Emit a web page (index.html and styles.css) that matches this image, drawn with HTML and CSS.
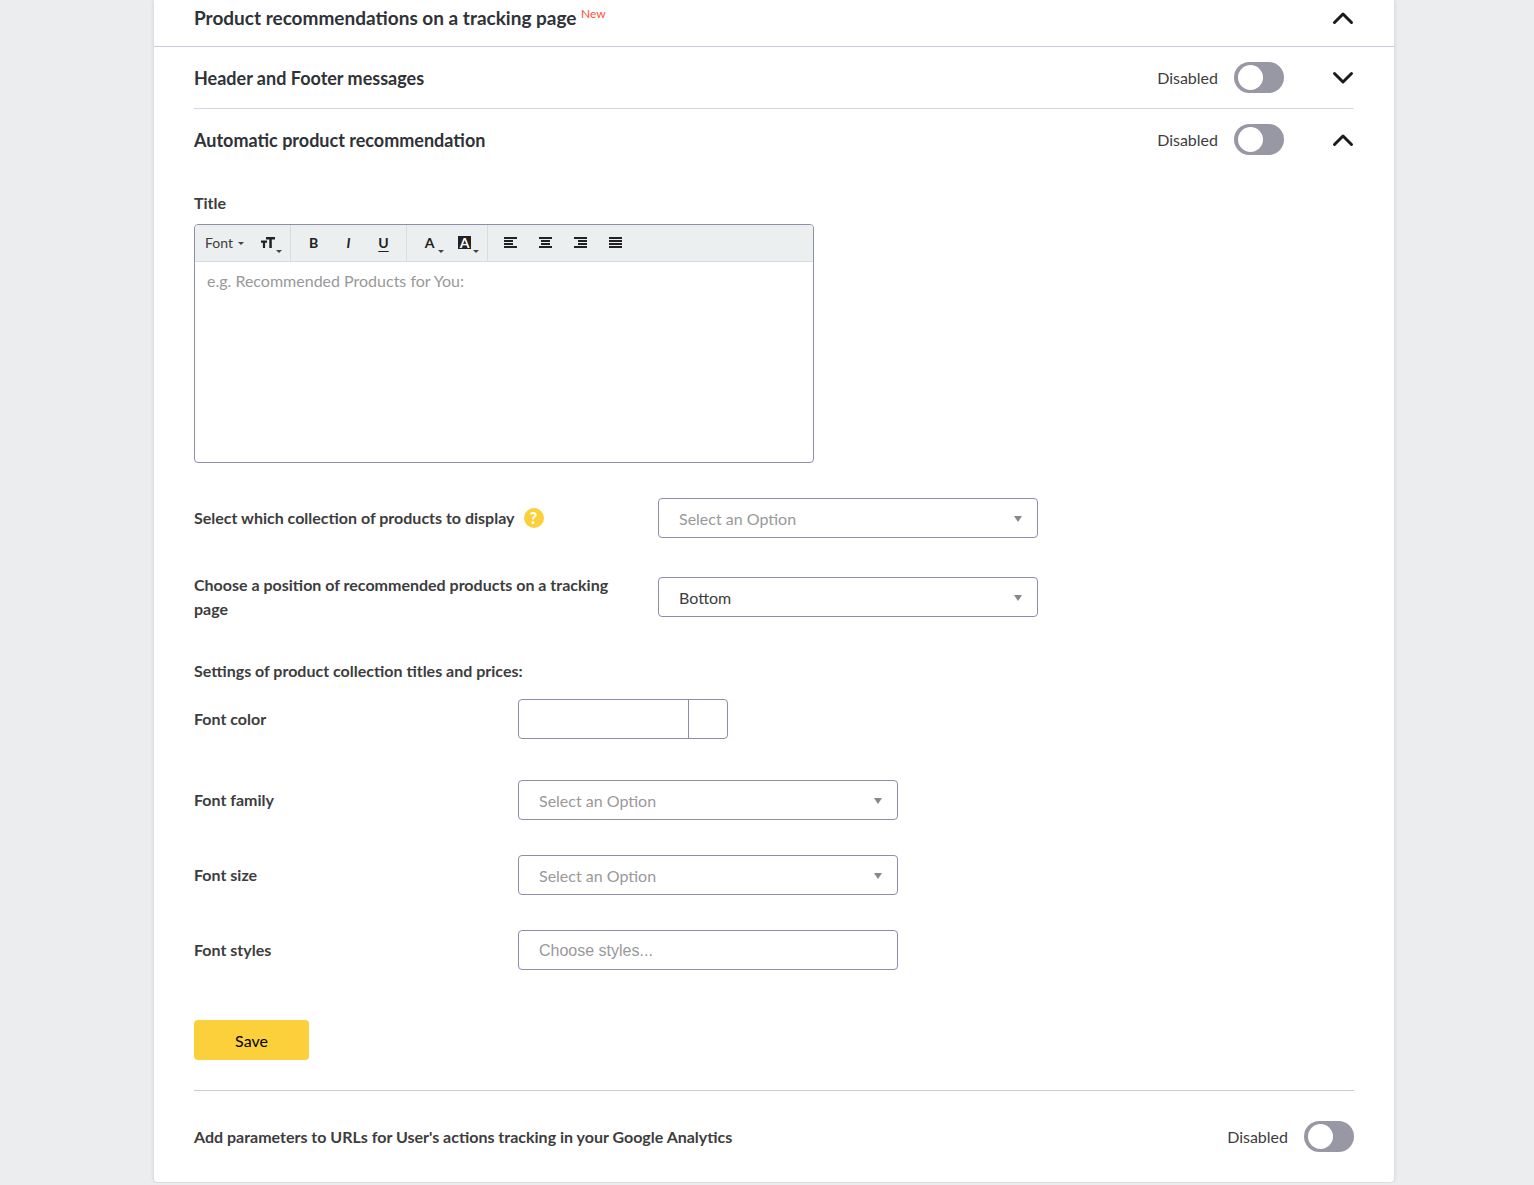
FILE: index.html
```html
<!DOCTYPE html>
<html lang="en">
<head>
<meta charset="utf-8">
<meta name="viewport" content="width=device-width, initial-scale=1">
<title>Product recommendations</title>
<link rel="stylesheet" href="styles.css">
</head>
<body>
<main class="panel">
  <header class="panel-head">
    <h1 class="heading">Product recommendations on a tracking page <sup class="badge-new">New</sup></h1>
    <button class="chevron" type="button" aria-label="Collapse section"><svg width="22" height="14" viewBox="0 0 22 14"><path d="M2.5 11.500 11 3l8.500 8.500"/></svg></button>
  </header>

  <section class="row row-line">
    <h2 class="heading">Header and Footer messages</h2>
    <label class="switch"><span>Disabled</span><input class="toggle" type="checkbox"></label>
    <button class="chevron" type="button" aria-label="Expand section"><svg width="22" height="14" viewBox="0 0 22 14"><path d="M2.500 2.500 11 11l8.500-8.500"/></svg></button>
  </section>

  <section class="row">
    <h2 class="heading">Automatic product recommendation</h2>
    <label class="switch"><span>Disabled</span><input class="toggle" type="checkbox"></label>
    <button class="chevron" type="button" aria-label="Collapse section"><svg width="22" height="14" viewBox="0 0 22 14"><path d="M2.500 11.500 11 3l8.500 8.500"/></svg></button>
  </section>

  <form class="form">
    <label class="label title-label" for="title">Title</label>
    <div class="editor">
      <div class="toolbar">
        <div class="group group-font">
          <button class="tool-font" type="button">Font<span class="caret"></span></button>
          <button class="tool has-menu" type="button" aria-label="Font size"><svg width="16" height="16" viewBox="0 0 16 16"><path class="fill" d="M6 2h9v2.500h-3.200V13H9.300V4.500H6zM1 5.500h6v2.200H5.100V13H2.900V7.700H1z"/></svg><span class="caret"></span></button>
        </div>
        <div class="group">
          <button class="tool glyph-b" type="button">B</button>
          <button class="tool glyph-i" type="button">I</button>
          <button class="tool glyph-u" type="button">U</button>
        </div>
        <div class="group">
          <button class="tool has-menu" type="button" aria-label="Text color"><span>A</span><span class="caret"></span></button>
          <button class="tool has-menu" type="button" aria-label="Background color"><span class="glyph-bg">A</span><span class="caret"></span></button>
        </div>
        <div class="group">
          <button class="tool" type="button" aria-label="Align left"><svg width="14" height="12" viewBox="0 0 14 12"><path class="fill" d="M0 0h13v2H0zM0 3h9v2H0zM0 6h9v2H0zM0 9h13v2H0z"/></svg></button>
          <button class="tool" type="button" aria-label="Align center"><svg width="14" height="12" viewBox="0 0 14 12"><path class="fill" d="M0 0h13v2H0zM2 3h9v2H2zM2 6h9v2H2zM0 9h13v2H0z"/></svg></button>
          <button class="tool" type="button" aria-label="Align right"><svg width="14" height="12" viewBox="0 0 14 12"><path class="fill" d="M0 0h13v2H0zM4 3h9v2H4zM4 6h9v2H4zM0 9h13v2H0z"/></svg></button>
          <button class="tool" type="button" aria-label="Justify"><svg width="14" height="12" viewBox="0 0 14 12"><path class="fill" d="M0 0h13v2H0zM0 3h13v2H0zM0 6h13v2H0zM0 9h13v2H0z"/></svg></button>
        </div>
      </div>
      <textarea class="editor-body" id="title" placeholder="e.g. Recommended Products for You:"></textarea>
    </div>

    <div class="field field-wide">
      <div class="label-cell">
        <label class="label" for="collection">Select which collection of products to display</label>
        <button class="help" type="button" aria-label="Help">?</button>
      </div>
      <div class="select"><select class="control muted" id="collection"><option>Select an Option</option></select></div>
    </div>
    <div class="field field-wide">
      <div class="label-cell"><label class="label" for="position">Choose a position of recommended products on a tracking page</label></div>
      <div class="select"><select class="control" id="position"><option>Bottom</option></select></div>
    </div>

    <h3 class="label subhead">Settings of product collection titles and prices:</h3>
    <div class="field field-color">
      <label class="label" for="color">Font color</label>
      <div class="color"><input class="color-text" id="color" type="text"><button class="color-swatch" type="button" aria-label="Pick a color"></button></div>
    </div>
    <div class="field">
      <label class="label" for="family">Font family</label>
      <div class="select"><select class="control muted" id="family"><option>Select an Option</option></select></div>
    </div>
    <div class="field">
      <label class="label" for="size">Font size</label>
      <div class="select"><select class="control muted" id="size"><option>Select an Option</option></select></div>
    </div>
    <div class="field">
      <label class="label" for="styles">Font styles</label>
      <input class="control styles-input" id="styles" type="text" placeholder="Choose styles...">
    </div>
    <button class="save" type="submit">Save</button>
  </form>

  <footer class="analytics">
    <label class="label" for="analytics">Add parameters to URLs for User's actions tracking in your Google Analytics</label>
    <div class="switch"><span>Disabled</span><input class="toggle" id="analytics" type="checkbox"></div>
  </footer>
</main>
</body>
</html>
```
FILE: styles.css
```css
* { box-sizing: border-box; }

body {
  margin: 0;
  background: #ebedef;
  color: #3d3d3d;
  font: 16px/24px Lato, "Open Sans", sans-serif;
}

button, input, select, textarea {
  margin: 0;
  padding: 0;
  border: 0;
  background: none;
  color: inherit;
  font: inherit;
}

.panel {
  margin: 0 140px 1px 154px;
  background: #fff;
  border-radius: 0 0 4px 4px;
  box-shadow: 0 0 4px rgba(0, 0, 0, .15);
}

.panel-head {
  display: flex;
  justify-content: space-between;
  align-items: center;
  padding: 4px 40px 14px;
  border-bottom: 1px solid #cbcbdb;
}

.heading {
  flex: 1;
  margin: 0;
  color: #2f3237;
  font-size: 18px;
  font-weight: 700;
  line-height: 28px;
}

.panel-head .heading { font-size: 19px; }

.badge-new {
  color: #ff5136;
  font-size: 12px;
  font-weight: 400;
  line-height: 0;
}

.chevron {
  display: flex;
  align-items: center;
  width: 22px;
  height: 22px;
}

.chevron path {
  fill: none;
  stroke: #1b1b1b;
  stroke-width: 3;
  stroke-linecap: round;
  stroke-linejoin: round;
}

.row {
  display: flex;
  align-items: center;
  gap: 48px;
  min-height: 61px;
  margin: 0 40px;
}

.row-line {
  min-height: 62px;
  border-bottom: 1px solid #d3d6e2;
}

.switch {
  display: flex;
  align-items: center;
  gap: 16px;
}

.toggle {
  display: flex;
  align-items: center;
  width: 50px;
  height: 31px;
  padding: 0 4px;
  border-radius: 16px;
  background: #9897a4;
  appearance: none;
}

.toggle::before {
  content: "";
  width: 25px;
  height: 25px;
  border-radius: 50%;
  background: #fff;
}

.toggle:checked { justify-content: flex-end; background: #fbd03b; }

.form {
  margin: 0 40px;
  padding: 21px 0 30px;
  border-bottom: 1px solid #cbcbdb;
}

.label {
  color: #3d3d3d;
  font-size: 16px;
  font-weight: 700;
}

.title-label { display: block; margin-bottom: 9px; }

.editor {
  max-width: 620px;
  border: 1px solid #8d8da9;
  border-radius: 4px;
  overflow: hidden;
}

.toolbar {
  display: flex;
  height: 37px;
  background: #ebeff0;
  border-bottom: 1px solid #d5dfe2;
}

.group {
  display: flex;
  padding: 0 5px;
}

.group + .group { border-left: 1px solid #d5dfe2; }
.group-font { padding: 0 5px 0 10px; }

.tool-font {
  display: flex;
  align-items: center;
  gap: 5px;
  width: 45px;
  font-size: 14px;
}

.tool {
  display: flex;
  position: relative;
  align-items: center;
  justify-content: center;
  width: 35px;
  height: 35px;
  color: #222;
  font-size: 14px;
  font-weight: 700;
  line-height: 16px;
}

.fill { fill: #222; }
.glyph-i { font-style: italic; }
.glyph-u { text-decoration: underline; text-underline-offset: 3px; }

.glyph-bg {
  width: 13px;
  height: 13px;
  background: #222;
  color: #fff;
  line-height: 13px;
}

.caret {
  border: 3px solid transparent;
  border-top-color: #444;
  border-bottom: 0;
}

.has-menu .caret { position: absolute; right: 3px; bottom: 7px; }

.editor-body {
  display: block;
  width: 100%;
  height: 200px;
  padding: 7px 12px;
  outline: 0;
  resize: none;
}

::placeholder { color: #999; opacity: 1; }

.field {
  display: grid;
  grid-template-columns: 324px minmax(0, 380px);
  align-items: center;
  margin-top: 35px;
}

.field-wide { grid-template-columns: 464px minmax(0, 380px); }
.field-wide + .field-wide { margin-top: 35px; }

.label-cell {
  display: flex;
  align-items: center;
  gap: 9px;
  padding-right: 24px;
}

.help {
  width: 20px;
  height: 20px;
  border-radius: 50%;
  background: #fbd03b;
  color: #fff;
  font-size: 16px;
  font-weight: 900;
  line-height: 20px;
}

.select { position: relative; }

.select::after {
  content: "";
  position: absolute;
  top: 18px;
  right: 16px;
  border: 4px solid transparent;
  border-top: 6px solid #888;
  border-bottom: 0;
  pointer-events: none;
}

.control {
  display: block;
  width: 100%;
  height: 40px;
  padding: 2px 20px 0;
  border: 1px solid #8d8da9;
  border-radius: 4px;
  appearance: none;
}

.muted { color: #999; }
.styles-input { font-family: "Liberation Sans", Arial, sans-serif; }

.subhead { margin: 38px 0 16px; }
.field-color { margin: 0 0 41px; }
.field-color + .field { margin-top: 0; }

.color {
  display: flex;
  width: 210px;
  height: 40px;
  border: 1px solid #8d8da9;
  border-radius: 4px;
}

.color-text { flex: 1; min-width: 0; padding: 0 20px; }
.color-swatch { width: 39px; border-left: 1px solid #8d8da9; }

.save {
  display: block;
  width: 115px;
  height: 40px;
  margin-top: 50px;
  padding-top: 2px;
  border-radius: 4px;
  background: #fbd03b;
  color: #000;
}

.analytics {
  display: flex;
  align-items: center;
  justify-content: space-between;
  padding: 30px 40px;
}
```
